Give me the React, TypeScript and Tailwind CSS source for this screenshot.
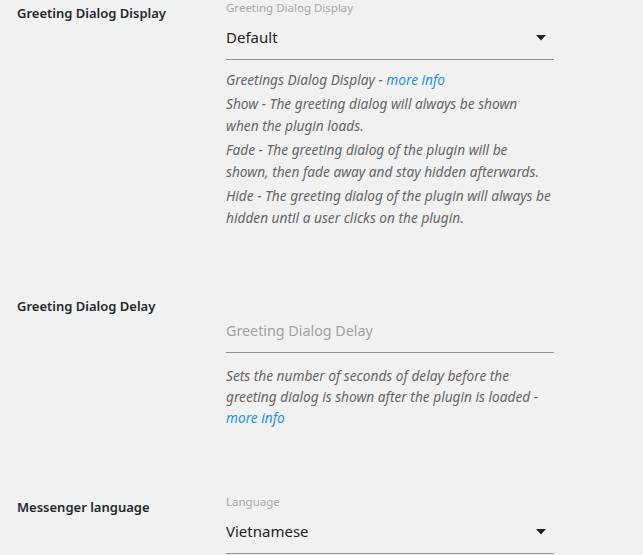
import React from 'react';

const font = { fontFamily: '"Noto Sans", "Open Sans", sans-serif' };

function Caret() {
  return (
    <svg width="10" height="6" viewBox="0 0 10 6" className="shrink-0">
      <path d="M0 0 L10 0 L5 5.5 Z" fill="#222" />
    </svg>
  );
}

function MoreInfo() {
  return <a href="#" className="text-[#1c95d4] no-underline">more info</a>;
}

export default function App() {
  return (
    <div className="min-h-screen bg-[#f1f1f1] text-[#23282d]" style={font}>
      {/* Greeting dialog display */}
      <div className="flex">
        <div className="w-[226px] shrink-0 pl-[17px] pt-[3px] text-[13px] leading-[20px] font-semibold">
          Greeting Dialog Display
        </div>
        <div className="w-[328px]">
          <div className="text-[11.5px] leading-[16px] text-[#a7a7a7]">Greeting Dialog Display</div>
          <div className="h-[44px] flex items-center justify-between border-b border-[#8f8f8f] pr-[8px]">
            <span className="text-[15px] text-[#222]">Default</span>
            <Caret />
          </div>
          <div className="mt-[9px] italic text-[13.7px] leading-[22px] text-[#666] flex flex-col gap-[2px] whitespace-nowrap">
            <p>Greetings Dialog Display - <MoreInfo /></p>
            <p>Show - The greeting dialog will always be shown<br />when the plugin loads.</p>
            <p>Fade - The greeting dialog of the plugin will be<br />shown, then fade away and stay hidden afterwards.</p>
            <p>Hide - The greeting dialog of the plugin will always be<br />hidden until a user clicks on the plugin.</p>
          </div>
        </div>
      </div>

      {/* Greeting dialog delay */}
      <div className="flex mt-[64px]">
        <div className="w-[226px] shrink-0 pl-[17px] pt-[3px] text-[13px] leading-[20px] font-semibold">
          Greeting Dialog Delay
        </div>
        <div className="w-[328px]">
          <div className="h-[16px]" />
          <div className="h-[44px] flex items-center border-b border-[#8f8f8f]">
            <span className="text-[14.3px] text-[#a0a0a0]">Greeting Dialog Delay</span>
          </div>
          <div className="mt-[12px] italic text-[13.7px] leading-[21px] text-[#666] whitespace-nowrap">
            <p>Sets the number of seconds of delay before the<br />greeting dialog is shown after the plugin is loaded -<br /><MoreInfo /></p>
          </div>
        </div>
      </div>

      {/* Messenger language */}
      <div className="flex mt-[66px]">
        <div className="w-[226px] shrink-0 pl-[17px] pt-[3px] text-[13px] leading-[20px] font-semibold">
          Messenger language
        </div>
        <div className="w-[328px]">
          <div className="text-[11.5px] leading-[16px] text-[#a7a7a7]">Language</div>
          <div className="h-[44px] flex items-center justify-between border-b border-[#8f8f8f] pr-[8px]">
            <span className="text-[15px] text-[#222]">Vietnamese</span>
            <Caret />
          </div>
        </div>
      </div>
    </div>
  );
}
